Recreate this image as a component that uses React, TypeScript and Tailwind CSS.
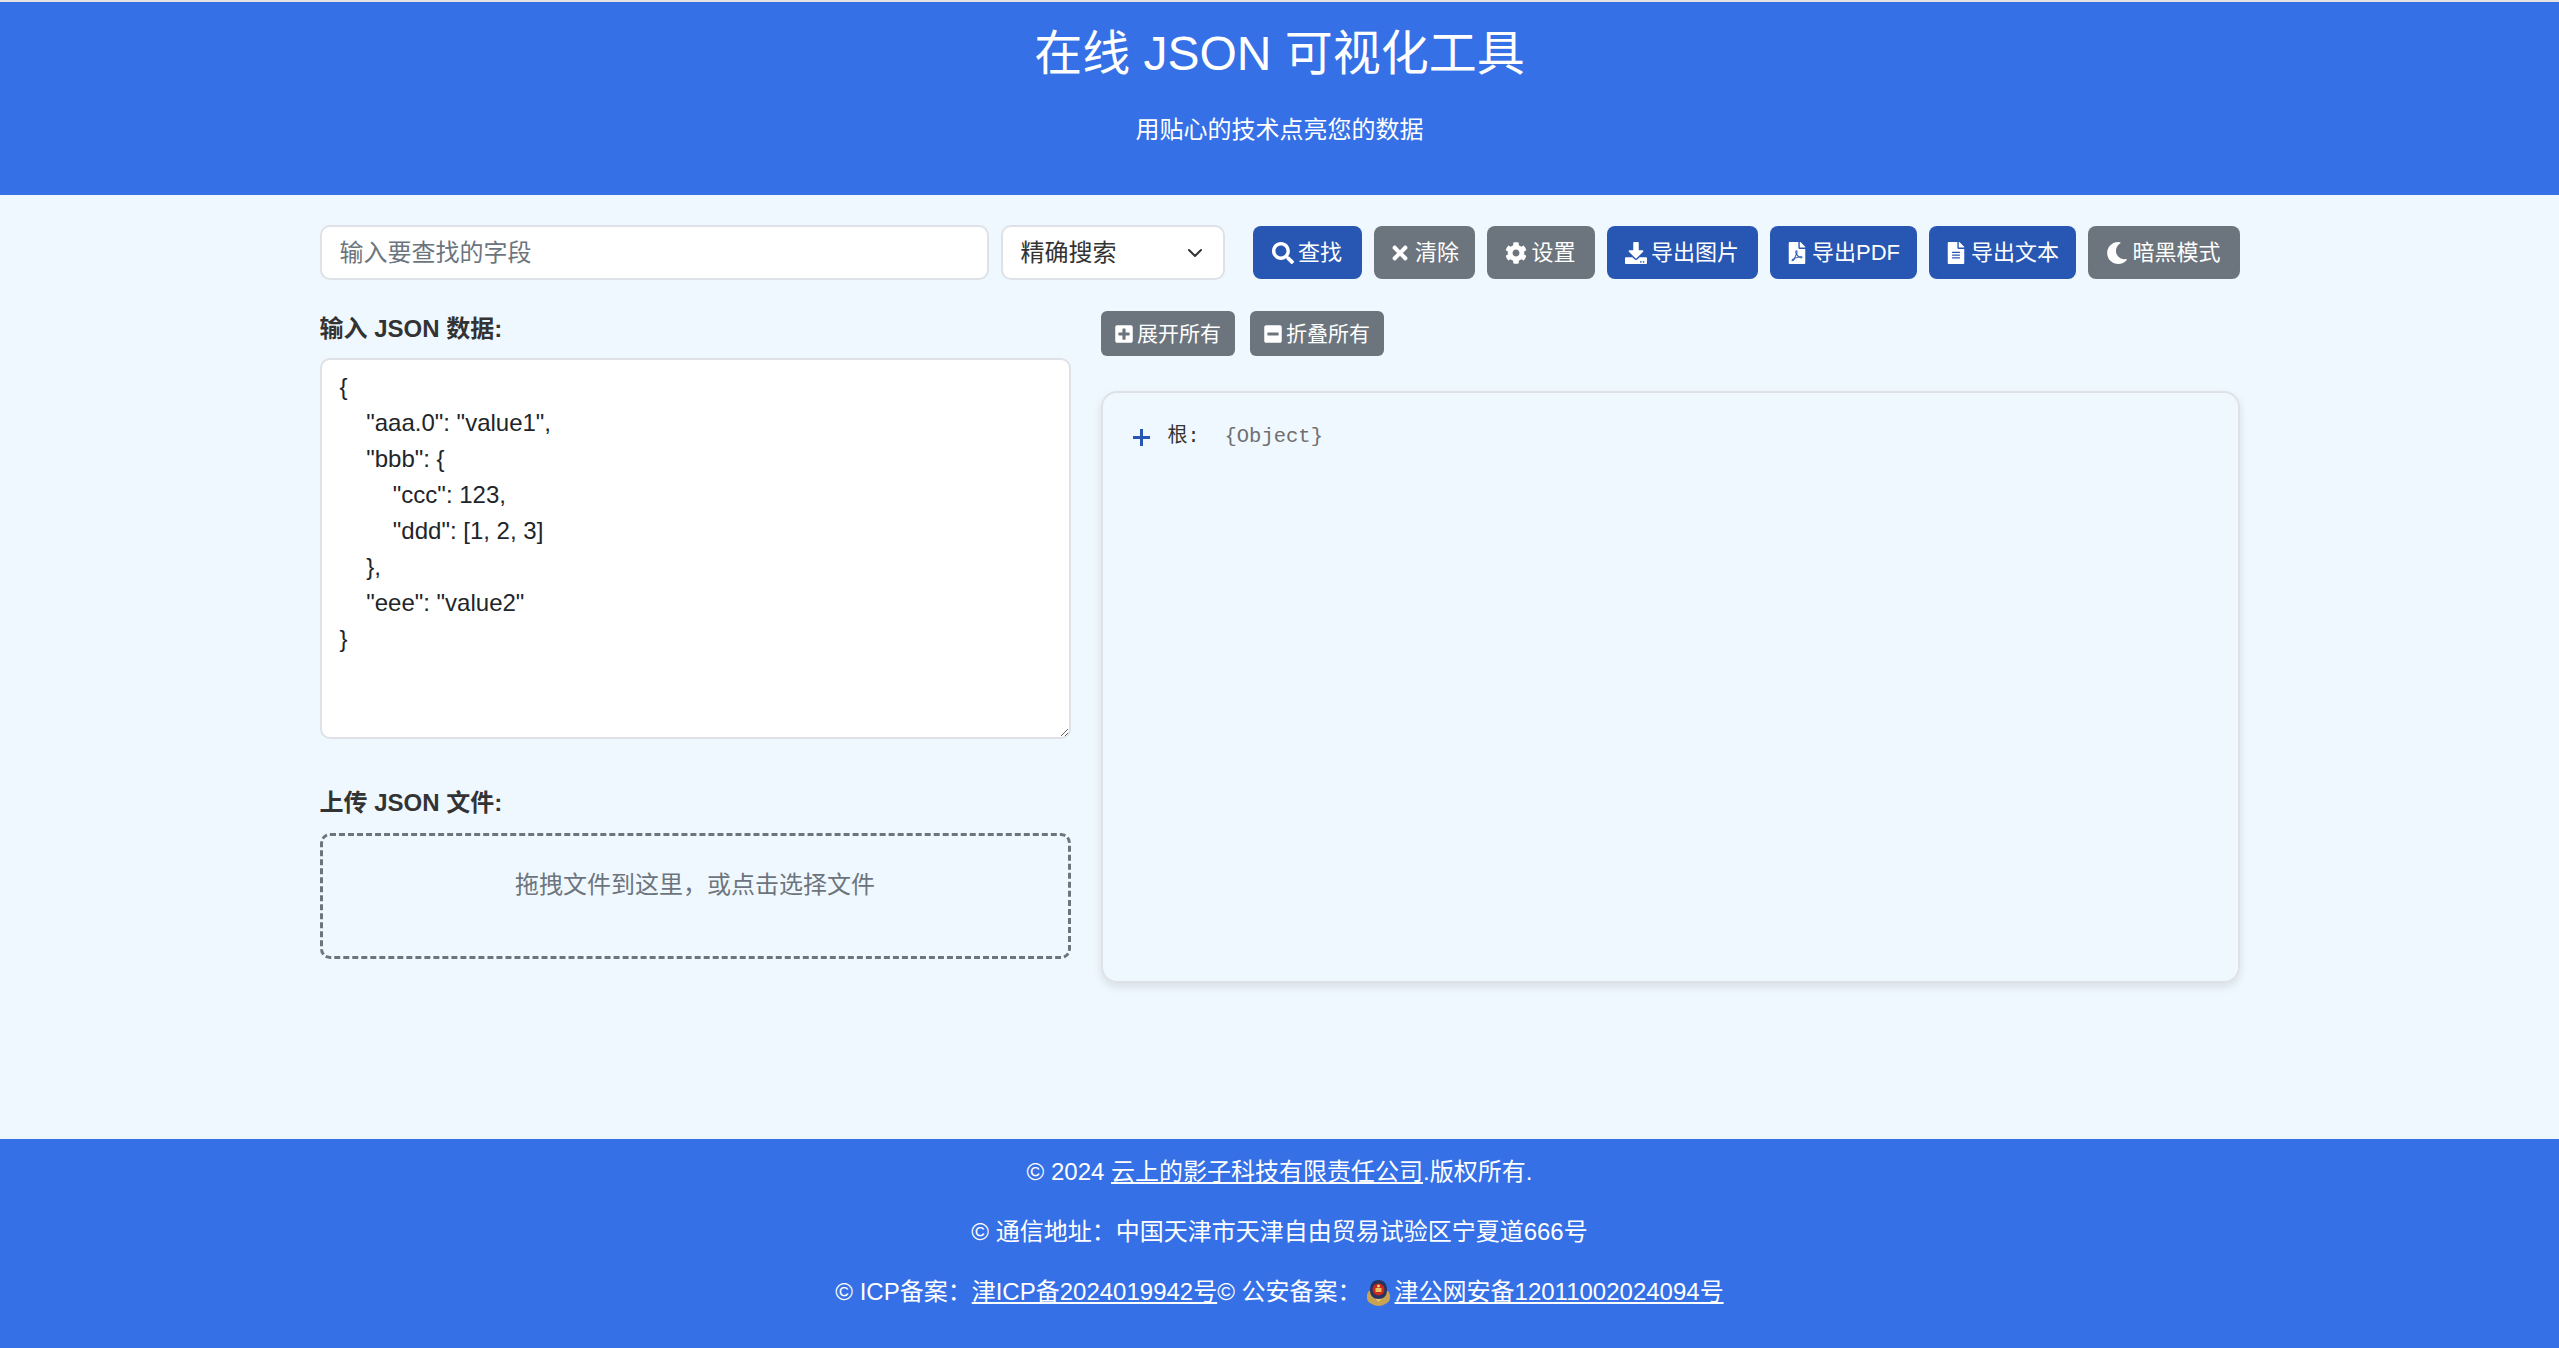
import { ChevronDown } from 'lucide-react';
import {
  FaSearch,
  FaTimes,
  FaCog,
  FaDownload,
  FaFilePdf,
  FaFileAlt,
  FaMoon,
  FaPlusSquare,
  FaMinusSquare,
} from 'react-icons/fa';

const sans = "font-['Liberation_Sans','Noto_Sans_CJK_SC',sans-serif]";

const toolbar = [
  { icon: FaSearch, label: '查找', cls: 'bg-[#2756b3] w-[109px]' },
  { icon: FaTimes, label: '清除', cls: 'bg-[#6c757d] w-[101px]' },
  { icon: FaCog, label: '设置', cls: 'bg-[#6c757d] w-[108px]' },
  { icon: FaDownload, label: '导出图片', cls: 'bg-[#2756b3] w-[151px]' },
  { icon: FaFilePdf, label: '导出PDF', cls: 'bg-[#2756b3] w-[147px]' },
  { icon: FaFileAlt, label: '导出文本', cls: 'bg-[#2756b3] w-[147px]' },
  { icon: FaMoon, label: '暗黑模式', cls: 'bg-[#6c757d] w-[152px]' },
];

const sample = `{
    "aaa.0": "value1",
    "bbb": {
        "ccc": 123,
        "ddd": [1, 2, 3]
    },
    "eee": "value2"
}`;

function PoliceBadge() {
  return (
    <svg viewBox="0 0 25 27" className="w-[25px] h-[27px] mx-[4px] shrink-0">
      <path d="M3 12C0 15 0 22 4 24c3 2 6 3 8.500 3s5.500-1 8.500-3c4-2 4-9 1-12z" fill="#c9a252" />
      <path d="M7 17l5.500 6 5.500-6z" fill="#e6c77e" />
      <path d="M12.500 1C18 1 21 5 21 11s-3.500 9-8.500 9S4 17 4 11s3-10 8.500-10z" fill="#27345e" />
      <circle cx="12.500" cy="10.500" r="6" fill="#c92a20" />
      <rect x="9.500" y="9" width="6" height="4" fill="#e8c15a" />
      <circle cx="12.500" cy="7" r="1.500" fill="#f0d56c" />
    </svg>
  );
}

export default function App() {
  return (
    <div className={`min-h-screen flex flex-col bg-[#f0f8ff] text-[#333333] ${sans}`}>
      {/* Header */}
      <header className="h-[195px] border-t-2 border-[#e3e3e3] bg-[#3570e6] text-white text-center">
        <h1 className="text-[48px] leading-[60px] pt-[22px]">在线 JSON 可视化工具</h1>
        <p className="text-[24px] leading-[36px] mt-[28px]">用贴心的技术点亮您的数据</p>
      </header>

      {/* Main */}
      <main className="flex-1 w-[1920px] mx-auto">
        <div className="flex items-center mt-[30px]">
          <input
            placeholder="输入要查找的字段"
            className="w-[669px] h-[55px] px-[18px] text-[24px] bg-white border-2 border-[#dee2e6] rounded-[10px] placeholder:text-[#6c757d]"
          />
          <div className="w-[224px] h-[55px] ml-[12px] pl-[18px] pr-[16px] flex items-center justify-between text-[24px] bg-white border-2 border-[#dee2e6] rounded-[10px]">
            <span>精确搜索</span>
            <ChevronDown className="w-[24px] h-[24px]" strokeWidth={2} />
          </div>
          <div className="flex gap-[12px] ml-[28px]">
            {toolbar.map((b) => (
              <button
                key={b.label}
                className={`h-[53px] flex items-center justify-center gap-[4px] rounded-[8px] text-white text-[22px] ${b.cls}`}
              >
                <b.icon className="w-[22px] h-[22px]" />
                {b.label}
              </button>
            ))}
          </div>
        </div>

        <div className="flex mt-[31px]">
          <div className="w-[751px]">
            <label className="block text-[24px] leading-[36px] font-bold">输入 JSON 数据:</label>
            <textarea
              readOnly
              value={sample}
              className="block w-full h-[381px] mt-[11px] px-[18px] py-[9px] text-[24px] leading-[36px] text-[#212529] bg-white border-2 border-[#dee2e6] rounded-[10px]"
            />
            <label className="block text-[24px] leading-[36px] font-bold mt-[46px]">上传 JSON 文件:</label>
            <div className="h-[126px] mt-[12px] pt-[31px] text-center text-[24px] leading-[36px] text-[#6c757d] border-[3px] border-dashed border-[#6c757d] rounded-[10px]">
              拖拽文件到这里，或点击选择文件
            </div>
          </div>

          <div className="flex-1 ml-[30px]">
            <div className="flex gap-[15px]">
              {[
                { icon: FaPlusSquare, label: '展开所有' },
                { icon: FaMinusSquare, label: '折叠所有' },
              ].map((b) => (
                <button
                  key={b.label}
                  className="w-[134px] h-[45px] flex items-center justify-center gap-[3px] rounded-[6px] bg-[#6c757d] text-white text-[21px]"
                >
                  <b.icon className="w-[20px] h-[20px]" />
                  {b.label}
                </button>
              ))}
            </div>
            <div className="h-[592px] mt-[35px] pl-[30px] py-[28px] border-2 border-[#dee2e6] rounded-[16px] shadow-[0_4px_8px_rgba(0,0,0,0.1)]">
              <div className="flex items-center h-[32px] font-['Liberation_Mono','Noto_Sans_CJK_SC',monospace] text-[20px]">
                <svg viewBox="0 0 17 17" className="w-[17px] h-[17px] mr-[18px]">
                  <path d="M8.500 0v17M0 8.500h17" stroke="#2756b3" strokeWidth="3" fill="none" />
                </svg>
                <span>根: </span>
                <span className="text-[#6f6f6f] text-[20.5px] ml-[25px]">{'{Object}'}</span>
              </div>
            </div>
          </div>
        </div>
      </main>

      {/* Footer */}
      <footer className="h-[209px] bg-[#3570e6] text-white text-center text-[24px] leading-[36px] pt-[15px]">
        <p>© 2024 <a className="underline">云上的影子科技有限责任公司</a>.版权所有.</p>
        <p className="mt-[24px]">© 通信地址：中国天津市天津自由贸易试验区宁夏道666号</p>
        <p className="mt-[24px] flex justify-center items-center">
          © ICP备案：<a className="underline">津ICP备2024019942号</a>© 公安备案：
          <PoliceBadge />
          <a className="underline">津公网安备12011002024094号</a>
        </p>
      </footer>
    </div>
  );
}
